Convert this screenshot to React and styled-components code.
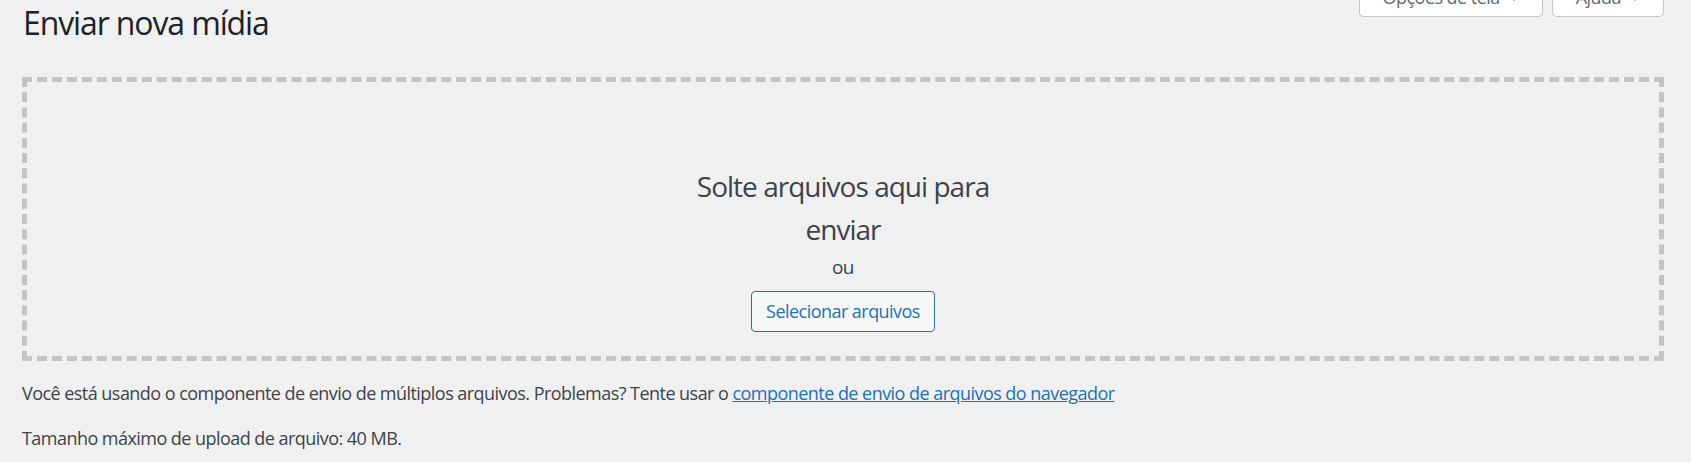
import React from 'react';
import styled, { createGlobalStyle } from 'styled-components';

const GlobalStyle = createGlobalStyle`
    html, body {
        margin: 0;
        padding: 0;
        background: #f0f0f1;
    }
    body {
        font-family: "Open Sans", sans-serif;
        letter-spacing: -0.03em;
        color: #3c434a;
        font-size: 18px;
    }
`;

const Wrap = styled.div`
    padding: 0 27px 0 22px;
    overflow: hidden;
    height: 462px;
    box-sizing: border-box;
`;

const Header = styled.div`
    display: flex;
    justify-content: space-between;
    align-items: flex-start;
`;

const Title = styled.h1`
    margin: 0;
    padding: 2px 0 0 1px;
    font-size: 32px;
    line-height: 41.5px;
    font-weight: 400;
    letter-spacing: -0.035em;
    color: #1d2327;
`;

const MetaLinks = styled.div`
    display: flex;
    gap: 9px;
    margin-top: -22px;
`;

const MetaButton = styled.button`
    display: flex;
    align-items: center;
    white-space: nowrap;
    height: 39px;
    box-sizing: border-box;
    padding: 4px 14px 4px 23px;
    border: 1px solid #c3c4c7;
    border-top: none;
    border-radius: 0 0 5px 5px;
    background: #fff;
    color: #646970;
    font-family: inherit;
    letter-spacing: inherit;
    font-size: 18px;
    line-height: 30.6px;
    cursor: pointer;
`;

const Arrow = styled.svg`
    width: 28px;
    height: 28px;
    fill: #a7aaad;
    flex-shrink: 0;
`;

const DropArea = styled.div`
    margin-top: 33.5px;
    height: 284px;
    box-sizing: border-box;
    border: 5px dashed #c3c4c7;
    display: flex;
    justify-content: center;
`;

const DropInside = styled.div`
    width: 346px;
    padding-top: 83px;
    text-align: center;
`;

const DropInfo = styled.p`
    margin: 0;
    font-size: 28px;
    line-height: 43px;
    letter-spacing: -0.035em;
    color: #3c434a;
`;

const DropOr = styled.p`
    margin: 1.5px 0 0 0;
    font-size: 19px;
    line-height: 29px;
`;

const SelectButton = styled.button`
    margin-top: 9px;
    height: 41px;
    box-sizing: border-box;
    padding: 0 14px;
    border: 1px solid #2271b1;
    border-radius: 4px;
    background: #f6f7f7;
    color: #2271b1;
    font-family: inherit;
    letter-spacing: inherit;
    font-size: 18px;
    line-height: 39px;
    cursor: pointer;
`;

const Note = styled.p`
    margin: 18.5px 0 0 0;
    font-size: 18px;
    line-height: 27px;
    color: #3c434a;
`;

const Link = styled.a`
    color: #2271b1;
    text-decoration: underline;
`;

const ArrowDown = () => (
    <Arrow viewBox="0 0 20 20">
        <path d="M5 8l5 5 5-5z" />
    </Arrow>
);

const App = () => (
    <>
        <GlobalStyle />
        <Wrap>
            <Header>
                <Title>Enviar nova mídia</Title>
                <MetaLinks>
                    <MetaButton type="button">Opções de tela<ArrowDown /></MetaButton>
                    <MetaButton type="button">Ajuda<ArrowDown /></MetaButton>
                </MetaLinks>
            </Header>
            <DropArea>
                <DropInside>
                    <DropInfo>Solte arquivos aqui para enviar</DropInfo>
                    <DropOr>ou</DropOr>
                    <SelectButton type="button">Selecionar arquivos</SelectButton>
                </DropInside>
            </DropArea>
            <Note>
                Você está usando o componente de envio de múltiplos arquivos. Problemas? Tente usar o{' '}
                <Link href="#">componente de envio de arquivos do navegador</Link>
            </Note>
            <Note>Tamanho máximo de upload de arquivo: 40 MB.</Note>
        </Wrap>
    </>
);

export default App;
